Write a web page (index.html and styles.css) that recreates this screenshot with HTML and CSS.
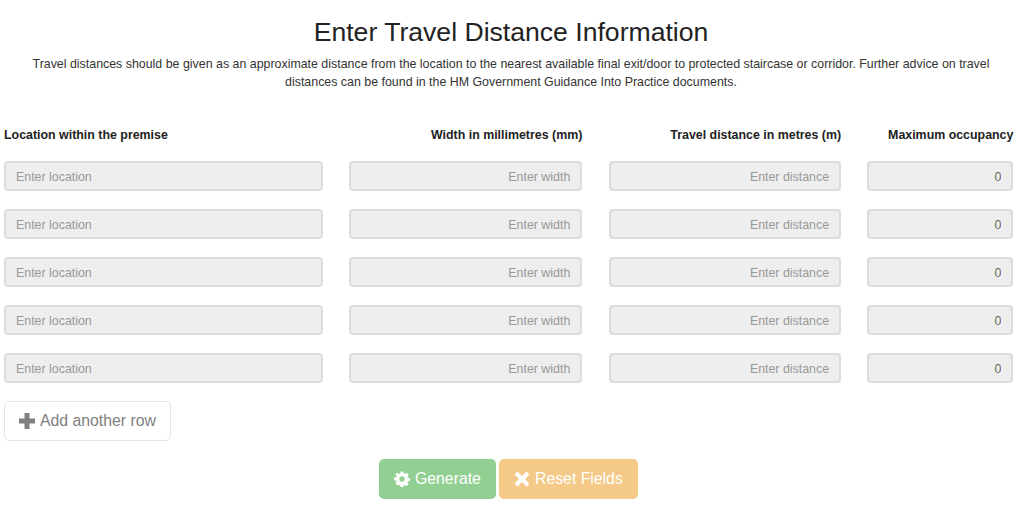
FILE: index.html
```html
<!DOCTYPE html>
<html lang="en">
  <head>
    <meta charset="UTF-8" />
    <title>Enter Travel Distance Information</title>
    <link rel="stylesheet" href="styles.css">
  </head>

  <body>
    <div class="header">
      <h2>Enter Travel Distance Information</h2>
      <p class="intro">
        Travel distances should be given as an approximate distance from the location to the nearest available final exit/door to protected staircase or corridor. Further advice on travel distances can be found in the HM Government Guidance Into Practice documents.
      </p>
    </div>

    <form class="distance-form">
      <div class="row head">
        <label>Location within the premise</label>
        <label class="right">Width in millimetres (mm)</label>
        <label class="right">Travel distance in metres (m)</label>
        <label class="right">Maximum occupancy</label>
      </div>

      <div class="row">
        <input type="text" placeholder="Enter location" disabled />
        <input class="right" type="text" placeholder="Enter width" disabled />
        <input class="right" type="text" placeholder="Enter distance" disabled />
        <input class="right" type="text" value="0" disabled />
      </div>
      <div class="row">
        <input type="text" placeholder="Enter location" disabled />
        <input class="right" type="text" placeholder="Enter width" disabled />
        <input class="right" type="text" placeholder="Enter distance" disabled />
        <input class="right" type="text" value="0" disabled />
      </div>
      <div class="row">
        <input type="text" placeholder="Enter location" disabled />
        <input class="right" type="text" placeholder="Enter width" disabled />
        <input class="right" type="text" placeholder="Enter distance" disabled />
        <input class="right" type="text" value="0" disabled />
      </div>
      <div class="row">
        <input type="text" placeholder="Enter location" disabled />
        <input class="right" type="text" placeholder="Enter width" disabled />
        <input class="right" type="text" placeholder="Enter distance" disabled />
        <input class="right" type="text" value="0" disabled />
      </div>
      <div class="row">
        <input type="text" placeholder="Enter location" disabled />
        <input class="right" type="text" placeholder="Enter width" disabled />
        <input class="right" type="text" placeholder="Enter distance" disabled />
        <input class="right" type="text" value="0" disabled />
      </div>

      <button type="button" class="btn add-btn">
        <svg class="icon" viewBox="0 0 16 16"><path d="M5.500 0h5v5.500H16v5h-5.500V16h-5v-5.500H0v-5h5.500z" /></svg>
        Add another row
      </button>

      <div class="actions">
        <button type="button" class="btn generate-btn">
          <svg class="icon" viewBox="-0.5 -0.5 17 17"><path fill-rule="evenodd" d="M6.500 0h3l.4 2.200 1.300.5L13 1.400l2.100 2.100-1.300 1.800.5 1.300 2.200.4v3l-2.200.4-.5 1.300 1.300 1.800-2.100 2.100-1.800-1.300-1.300.5-.4 2.200h-3l-.4-2.200-1.300-.5L3 14.600.9 12.500l1.300-1.800-.5-1.300L-.5 9.500v-3l2.200-.4.5-1.300L.9 3 3 1.400l1.800 1.300 1.300-.5zM8 5.200a2.800 2.800 0 1 0 0 5.600 2.800 2.800 0 0 0 0-5.600z" /></svg>
          Generate
        </button>
        <button type="button" class="btn reset-btn">
          <svg class="icon" viewBox="0 0 16 16"><path d="M3.500.5 8 5l4.500-4.500 3 3L11 8l4.500 4.500-3 3L8 11l-4.500 4.500-3-3L5 8 .5 3.500z" /></svg>
          Reset Fields
        </button>
      </div>
    </form>
  </body>
</html>
```

FILE: styles.css
```css
* {
  margin: 0;
  padding: 0;
  box-sizing: border-box;
}

body {
  font-family: "Liberation Sans", Arial, sans-serif;
  background-color: white;
  color: #333;
}

.header {
  padding-right: 2px;
}

h2 {
  margin-top: 16px;
  font-size: 26.6px;
  line-height: 33px;
  font-weight: 400;
  text-align: center;
  color: #222;
}

.intro {
  width: 980px;
  margin: 6px auto 0;
  font-size: 12.4px;
  line-height: 18px;
  text-align: center;
}

.distance-form {
  padding: 0 10px 0 4px;
}

.row {
  display: grid;
  grid-template-columns: 319px 233px 232.5px 146px;
  column-gap: 26.3px;
  margin-bottom: 18px;
}

.head {
  margin-top: 36px;
  margin-bottom: 17px;
}

label {
  font-size: 12.4px;
  line-height: 17px;
  font-weight: bold;
  color: #222;
}

.right {
  text-align: right;
}

input {
  width: 100%;
  height: 30px;
  padding: 2px 10px 0;
  font-family: inherit;
  font-size: 12.4px;
  color: #666;
  -webkit-text-fill-color: #666;
  background-color: #eee;
  border: 2px solid #dcdcdc;
  border-radius: 4px;
  opacity: 1;
}

input::placeholder {
  color: #999;
  -webkit-text-fill-color: #999;
  opacity: 1;
}

.btn {
  display: inline-flex;
  align-items: center;
  gap: 5px;
  height: 40px;
  font-family: inherit;
  font-size: 15.8px;
  white-space: nowrap;
  border-radius: 5px;
}

.icon {
  flex: none;
  width: 16px;
  height: 16px;
  fill: currentColor;
}

.add-btn {
  padding: 0 14px;
  width: 167px;
  color: #808080;
  background-color: white;
  border: 1px solid #e4e4e4;
}

.actions {
  display: flex;
  justify-content: center;
  gap: 3px;
  margin-top: 18px;
  padding-right: 1px;
}

.generate-btn,
.reset-btn {
  color: white;
  border: 1px solid transparent;
  padding: 0 14px;
}

.generate-btn {
  width: 117px;
  background-color: #92cf92;
}

.reset-btn {
  width: 139px;
  padding-right: 0;
  background-color: #f5c988;
}
```
